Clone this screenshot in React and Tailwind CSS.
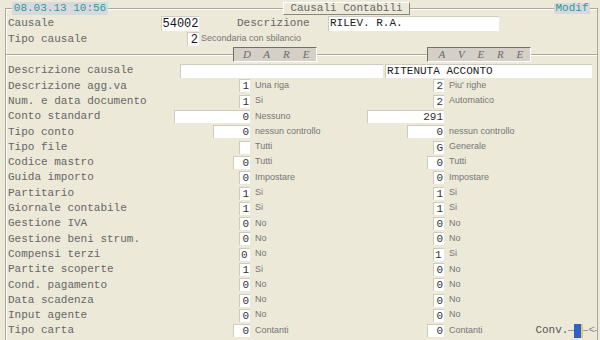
import React from "react";

const rows = [
  { l: "Descrizione agg.va", d: "1", dw: 11, dd: "Una riga", a: "2", aw: 11, ad: "Piu' righe" },
  { l: "Num. e data documento", d: "1", dw: 11, dd: "Si", a: "2", aw: 11, ad: "Automatico" },
  { l: "Conto standard", d: "0", dw: 76, dd: "Nessuno", a: "291", aw: 77, ad: "" },
  { l: "Tipo conto", d: "0", dw: 37, dd: "nessun controllo", a: "0", aw: 37, ad: "nessun controllo" },
  { l: "Tipo file", d: "", dw: 11, dd: "Tutti", a: "G", aw: 11, ad: "Generale" },
  { l: "Codice mastro", d: "0", dw: 17, dd: "Tutti", a: "0", aw: 17, ad: "Tutti" },
  { l: "Guida importo", d: "0", dw: 11, dd: "Impostare", a: "0", aw: 11, ad: "Impostare" },
  { l: "Partitario", d: "1", dw: 11, dd: "Si", a: "1", aw: 11, ad: "Si" },
  { l: "Giornale contabile", d: "1", dw: 11, dd: "Si", a: "1", aw: 11, ad: "Si" },
  { l: "Gestione IVA", d: "0", dw: 11, dd: "No", a: "0", aw: 11, ad: "No" },
  { l: "Gestione beni strum.", d: "0", dw: 11, dd: "No", a: "0", aw: 11, ad: "No" },
  { l: "Compensi terzi", d: "0", dw: 11, dd: "No", a: "1", aw: 11, ad: "Si", left: true },
  { l: "Partite scoperte", d: "1", dw: 11, dd: "Si", a: "0", aw: 11, ad: "No" },
  { l: "Cond. pagamento", d: "0", dw: 11, dd: "No", a: "0", aw: 11, ad: "No" },
  { l: "Data scadenza", d: "0", dw: 11, dd: "No", a: "0", aw: 11, ad: "No" },
  { l: "Input agente", d: "0", dw: 11, dd: "No", a: "0", aw: 11, ad: "No" },
  { l: "Tipo carta", d: "0", dw: 17, dd: "Contanti", a: "0", aw: 17, ad: "Contanti", conv: true },
];

function Box({ v, w, left }) {
  return (
    <div
      className={
        "h-[13px] bg-white border-t border-l border-[#cfcbbd] text-[11px] leading-[12px] text-[#333] flex items-center " +
        (left ? "justify-start pl-[1px]" : "justify-end pr-[1px]")
      }
      style={{ width: w }}
    >
      {v}
    </div>
  );
}

function Desc({ children }) {
  return (
    <span className="font-['Liberation_Sans',Arial,sans-serif] text-[9px] leading-[12px] text-[#767676] whitespace-nowrap -mt-[2px]">
      {children}
    </span>
  );
}

function Line() {
  return <div className="h-0 border-t border-[#aca899] shadow-[0_1px_0_white]" />;
}

export default function App() {
  return (
    <div className="w-[600px] h-[340px] bg-[#ECE9D8] overflow-hidden pt-[8px] pl-[5px] pr-[2px] font-['Liberation_Mono','Courier_New',monospace] text-[11px] text-[#666]">
      <div className="h-[340px] border-t border-l border-r border-[#aca899] shadow-[inset_1px_1px_0_white]">
        {/* title row */}
        <div className="-mt-[8px] h-[14px] flex items-center">
          <div className="ml-[6px] w-[96px] h-[13px] bg-[#D6DADE] text-[#2f9898] text-[11px] leading-[13px] flex items-center justify-center whitespace-nowrap">
            08.03.13 10:56
          </div>
          <div className="ml-[175px] w-[127px] h-[13px] bg-[#ECE9D8] border-t border-l border-white border-b border-r border-b-[#8a877a] border-r-[#8a877a] flex items-center justify-center text-[#666] text-[11px] leading-[11px] whitespace-nowrap">
            Causali Contabili
          </div>
          <div className="ml-[144px] w-[36px] h-[11px] bg-[#D6DADE] text-[#2f9898] text-[11px] leading-[11px] flex items-center justify-center">
            Modif
          </div>
        </div>

        {/* header rows */}
        <div className="h-[16px] flex items-center pl-[2px]">
          <div className="w-[153px]">Causale</div>
          <div className="w-[38px] h-[15px] bg-white border-t border-l border-[#cfcbbd] text-[#111] text-[12px] leading-[14px] flex items-center justify-center">
            54002
          </div>
          <div className="ml-[38px] w-[91px]">Descrizione</div>
          <div className="w-[171px] h-[15px] bg-white border-t border-l border-[#cfcbbd] text-[#222] flex items-center pl-[1px]">
            RILEV. R.A.
          </div>
        </div>
        <div className="h-[16px] flex items-center pl-[2px]">
          <div className="w-[179px]">Tipo causale</div>
          <div className="w-[12px] h-[14px] bg-white border-t border-l border-[#cfcbbd] text-[#111] text-[12px] flex items-center justify-end pr-[1px]">
            2
          </div>
          <div className="ml-[2px] flex">
            <Desc>Secondaria con sbilancio</Desc>
          </div>
        </div>

        {/* separator with DARE / AVERE */}
        <div className="h-[15px] flex items-center">
          <div className="w-[227px]"><Line /></div>
          <div className="w-[84px] h-[15px] bg-[#D4D0C8] border-t border-l border-[#6f6f6f] border-b border-r border-b-white border-r-white flex items-center pl-[3px] font-['Liberation_Serif',serif] italic text-[11px] text-[#6a6a6a]">
            {["D", "A", "R", "E"].map((c, i) => (
              <span key={i} className="w-[20px] text-center">{c}</span>
            ))}
          </div>
          <div className="w-[110px]"><Line /></div>
          <div className="w-[104px] h-[15px] bg-[#D4D0C8] border-t border-l border-[#6f6f6f] border-b border-r border-b-white border-r-white flex items-center pl-[4px] font-['Liberation_Serif',serif] italic text-[11px] text-[#6a6a6a]">
            {["A", "V", "E", "R", "E"].map((c, i) => (
              <span key={i} className="w-[19.5px] text-center">{c}</span>
            ))}
          </div>
          <div className="flex-1"><Line /></div>
        </div>

        {/* Descrizione causale */}
        <div className="h-[15.3px] mt-[1px] flex items-center pl-[2px]">
          <div className="w-[172px]">Descrizione causale</div>
          <div className="w-[203px] h-[14px] bg-white border-t border-l border-[#cfcbbd]" />
          <div className="ml-[2px] w-[207px] h-[14px] bg-white border-t border-l border-[#cfcbbd] text-[#222] flex items-center pl-[1px]">
            RITENUTA ACCONTO
          </div>
        </div>

        <div className="grid grid-cols-[166px_78px_116px_78px_1fr] auto-rows-[15.3px]">
          {rows.map((r, i) => (
            <React.Fragment key={i}>
              <div className="pl-[2px] flex items-center whitespace-nowrap">{r.l}</div>
              <div className="flex items-center justify-end">
                <Box v={r.d} w={r.dw} left={r.left} />
              </div>
              <div className="flex items-center pl-[5px]">
                <Desc>{r.dd}</Desc>
              </div>
              <div className="flex items-center justify-end">
                <Box v={r.a} w={r.aw} left={r.left} />
              </div>
              <div className="flex items-center pl-[5px]">
                <Desc>{r.ad}</Desc>
                {r.conv && (
                  <div className="ml-auto flex items-center">
                    <span className="text-[#555]">Conv.</span>
                    <div className="w-[6px] h-0 border-t border-[#999]" />
                    <div className="w-[9px] h-[14px] bg-[#2f62c8] border-r-2 border-[#e8c860]" />
                    <div className="w-[5px] h-0 border-t border-[#999]" />
                    <span className="text-[#888] leading-[11px]">&lt;</span>
                    <div className="w-[2px] h-0 border-t border-[#999]" />
                  </div>
                )}
              </div>
            </React.Fragment>
          ))}
        </div>
      </div>
    </div>
  );
}
